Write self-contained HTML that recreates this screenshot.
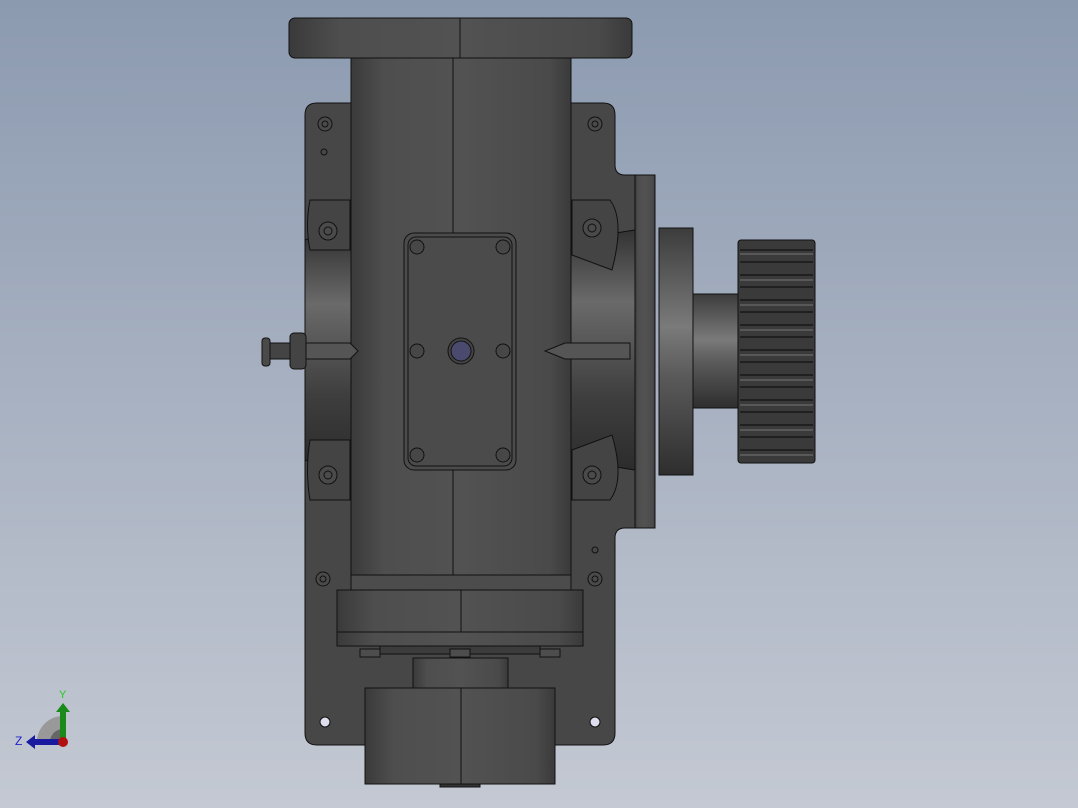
<!DOCTYPE html>
<html><head><meta charset="utf-8"><style>
html,body{margin:0;padding:0;width:1078px;height:808px;overflow:hidden}
body{background:linear-gradient(#8c9ab0,#c4c9d3)}
svg{display:block}
</style></head><body>
<svg width="1078" height="808" viewBox="0 0 1078 808" xmlns="http://www.w3.org/2000/svg" stroke="#111" stroke-width="1">
<defs>
<linearGradient id="cyl" x1="0" x2="1" y1="0" y2="0">
<stop offset="0" stop-color="#3a3a3a"/><stop offset="0.15" stop-color="#4e4e4e"/><stop offset="0.5" stop-color="#525252"/><stop offset="0.9" stop-color="#4a4a4a"/><stop offset="1" stop-color="#3a3a3a"/></linearGradient>
<linearGradient id="vcyl" x1="0" x2="0" y1="0" y2="1">
<stop offset="0" stop-color="#3c3c3c"/><stop offset="0.4" stop-color="#7a7a7a"/><stop offset="0.6" stop-color="#5a5a5a"/><stop offset="1" stop-color="#2e2e2e"/></linearGradient>
<linearGradient id="ring" x1="0" x2="0" y1="0" y2="1">
<stop offset="0" stop-color="#333"/><stop offset="0.3" stop-color="#6a6a6a"/><stop offset="0.7" stop-color="#3e3e3e"/><stop offset="1" stop-color="#2c2c2c"/></linearGradient>
</defs>
<!-- back plate -->
<path d="M317 103 H603 Q615 103 615 115 V165 Q615 175 625 175 H635 V528 H625 Q615 528 615 538 V733 Q615 745 603 745 H317 Q305 745 305 733 V115 Q305 103 317 103 Z" fill="#474747"/>
<!-- left ring -->
<path d="M305 240 Q330 230 352 240 V460 Q330 470 305 460 Z" fill="url(#ring)"/>
<!-- right ring -->
<path d="M571 240 L635 230 V470 L571 460 Z" fill="url(#ring)"/>
<!-- bosses -->
<g fill="#444">
<path d="M310 200 H350 V250 H310 Q305 225 310 200Z"/><path d="M310 440 H350 V500 H310 Q305 470 310 440Z"/>
<path d="M572 200 H610 Q625 220 612 270 L572 255Z"/><path d="M572 450 L612 435 Q625 480 610 500 H572Z"/>
</g>
<!-- flange right -->
<rect x="635" y="175" width="20" height="353" fill="url(#cyl)"/>
<rect x="659" y="228" width="34" height="247" fill="url(#vcyl)"/>
<rect x="693" y="294" width="45" height="114" fill="url(#vcyl)"/>
<rect x="738" y="240" width="77" height="223" rx="3" fill="#3a3a3a"/>
<g stroke="#111" stroke-width="1.2">
<path d="M740 250H813M740 262H813M740 275H813M740 287H813M740 300H813M740 312H813M740 325H813M740 337H813M740 350H813M740 362H813M740 375H813M740 387H813M740 400H813M740 412H813M740 425H813M740 437H813M740 450H813"/></g>
<g stroke="#777" stroke-width="1"><path d="M740 254H813M740 280H813M740 305H813M740 330H813M740 355H813M740 380H813M740 405H813M740 430H813M740 455H813"/></g>
<!-- top flange -->
<rect x="289" y="18" width="343" height="40" rx="6" fill="url(#cyl)"/>
<line x1="460" y1="18" x2="460" y2="58"/>
<!-- main tube -->
<rect x="351" y="58" width="220" height="532" fill="url(#cyl)"/>
<line x1="453" y1="58" x2="453" y2="590"/>
<!-- cover -->
<rect x="404" y="233" width="112" height="237" rx="10" fill="#4b4b4b"/>
<rect x="408" y="237" width="104" height="229" rx="8" fill="none"/>
<g fill="#474747">
<circle cx="417" cy="247" r="7"/><circle cx="503" cy="247" r="7"/><circle cx="417" cy="351" r="7"/><circle cx="503" cy="351" r="7"/><circle cx="417" cy="455" r="7"/><circle cx="503" cy="455" r="7"/></g>
<circle cx="461" cy="351" r="13" fill="#444"/><circle cx="461" cy="351" r="10" fill="#4a4a6e"/>
<!-- pins -->
<path d="M306 343 H350 L358 351 L350 359 H306Z" fill="#555"/>
<path d="M630 343 H565 L545 351 L565 359 H630Z" fill="#555"/>
<!-- left knob -->
<rect x="290" y="333" width="16" height="36" rx="4" fill="#444"/>
<rect x="270" y="343" width="20" height="16" fill="#444"/>
<rect x="262" y="338" width="8" height="28" rx="3" fill="#4a4a4a"/>
<!-- plate bolts -->
<g fill="#4a4a4a">
<circle cx="325" cy="124" r="7"/><circle cx="595" cy="124" r="7"/><circle cx="328" cy="231" r="9"/><circle cx="592" cy="228" r="9"/><circle cx="328" cy="475" r="9"/><circle cx="592" cy="475" r="9"/><circle cx="323" cy="579" r="7"/><circle cx="595" cy="579" r="7"/></g>
<g fill="none"><circle cx="325" cy="124" r="3"/><circle cx="595" cy="124" r="3"/><circle cx="328" cy="231" r="4"/><circle cx="592" cy="228" r="4"/><circle cx="328" cy="475" r="4"/><circle cx="592" cy="475" r="4"/><circle cx="323" cy="579" r="3"/><circle cx="595" cy="579" r="3"/><circle cx="324" cy="152" r="3"/><circle cx="595" cy="550" r="3"/></g>
<circle cx="325" cy="722" r="5" fill="#dde"/><circle cx="595" cy="722" r="5" fill="#dde"/>
<!-- bottom parts -->
<rect x="351" y="575" width="220" height="15" fill="#4c4c4c"/>
<rect x="337" y="590" width="246" height="42" fill="url(#cyl)"/>
<rect x="337" y="632" width="246" height="14" fill="url(#cyl)"/>
<line x1="461" y1="590" x2="461" y2="632"/>
<rect x="380" y="646" width="160" height="8" fill="#3c3c3c"/>
<g fill="#4d4d4d"><rect x="360" y="649" width="20" height="8"/><rect x="450" y="649" width="20" height="8"/><rect x="540" y="649" width="20" height="8"/></g>
<rect x="413" y="658" width="95" height="30" fill="url(#cyl)"/>
<rect x="365" y="688" width="190" height="96" fill="url(#cyl)"/>
<line x1="461" y1="688" x2="461" y2="784"/>
<rect x="440" y="784" width="40" height="3" fill="#333"/>
<!-- triad -->
<g stroke="none">
<path d="M37 742 A26 26 0 0 1 63 716 V742Z" fill="#999"/>
<path d="M50 742 A13 13 0 0 1 63 729 V742Z" fill="#666"/>
<rect x="60" y="710" width="6" height="32" fill="#1a8a1a"/><path d="M56 712 L63 703 L70 712Z" fill="#1a8a1a"/>
<rect x="33" y="739" width="28" height="6" fill="#1a1aa0"/><path d="M35 735 L26 742 L35 749Z" fill="#1a1aa0"/>
<circle cx="63" cy="742" r="5" fill="#b01010"/>
</g>
<text x="59" y="698" font-family="Liberation Sans, sans-serif" font-size="11" fill="#2c2" stroke="none">Y</text>
<text x="15" y="745" font-family="Liberation Sans, sans-serif" font-size="12" fill="#22c" stroke="none">Z</text>
</svg>
</body></html>
